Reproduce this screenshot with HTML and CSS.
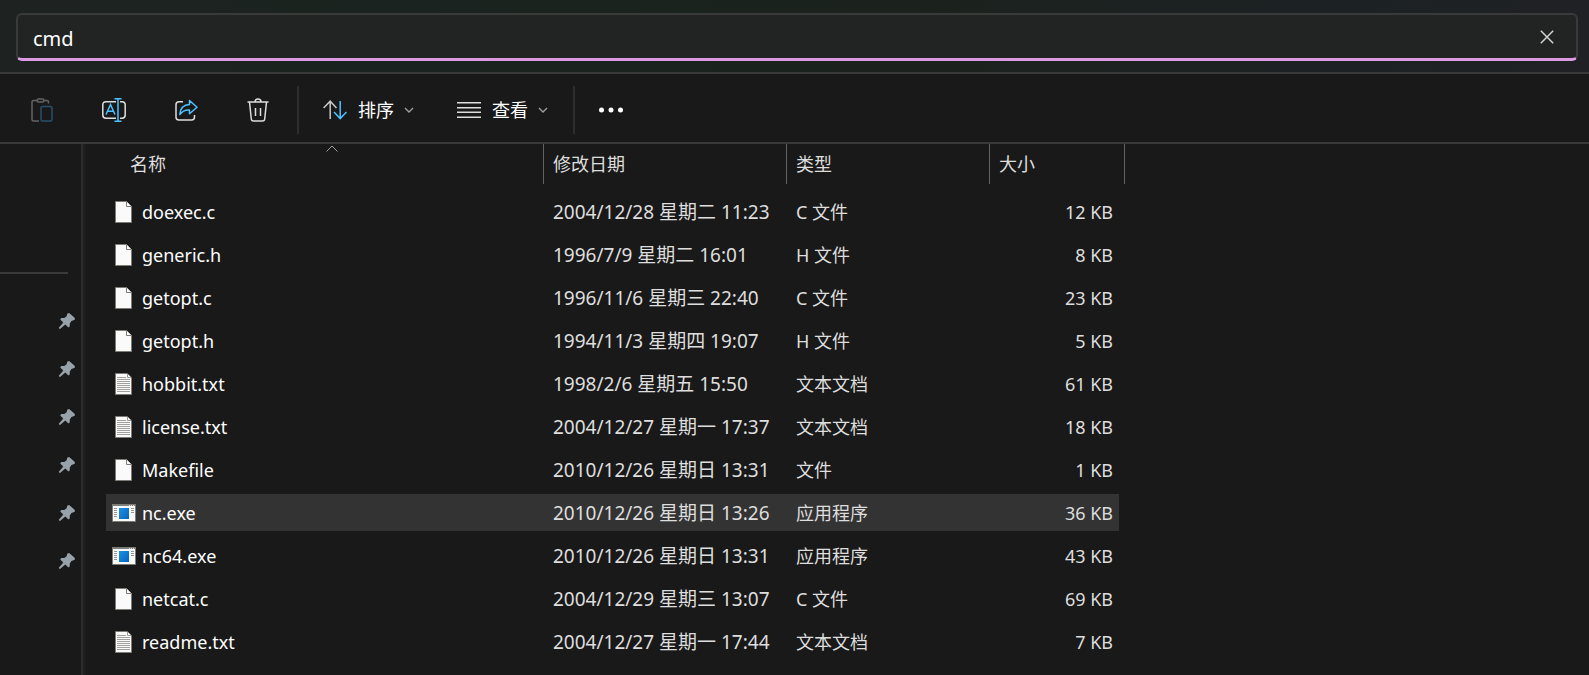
FILE: index.html
```
<!DOCTYPE html>
<html lang="zh-CN">
<head>
<meta charset="utf-8">
<title>cmd</title>
<link rel="stylesheet" href="styles.css">
</head>
<body>
<svg class="defs" aria-hidden="true">
  <symbol id="doc" viewBox="0 0 17 22"><path d="M.5.5h11l5 5v16H.5z" fill="#fafafa" stroke="#7c7b76"/><path d="M11.5.5v5h5" fill="#fafafa" stroke="#7c7b76"/></symbol>
  <symbol id="txt" viewBox="0 0 17 22"><path d="M.5.5h11l5 5v16H.5z" fill="#fafafa" stroke="#7c7b76"/><path d="M12.500.500v4h4" fill="#fafafa" stroke="#9a9a98"/><path d="M2 4.500h9M2 6.500h13M2 8.500h13M2 10.500h13M2 12.500h13M2 14.500h13M2 16.500h13M2 18.500h13" stroke="#a09f9b"/></symbol>
  <symbol id="exe" viewBox="0 0 24 18"><path d="M.5.5h23v17H.5z" fill="#fafafa" stroke="#7c7b76"/><path d="M0 0h24v2H0z" fill="#7c7b76"/><path d="M17 1.500h1M19 1.500h1M21 1.500h1" stroke="#ddd"/><path d="M2 4.500h3M2 6.500h3M2 8.500h3M2 10.500h3M2 12.500h3M19 4.500h3M19 6.500h3M19 8.500h3" stroke="#969696"/><path d="M7 4h10v11H7z" fill="url(#blue)"/></symbol>
  <symbol id="pin" viewBox="0 0 16 16"><path d="M8.500.3H10.500L15.800 5v1.700L12.500 8 10.800 10.600V13.200L9.500 14.500 6.300 11.500 1.300 15.800H0V14.500L4.300 9.500 1.200 6.500 2.300 5H5.300L7.600 3.300z" fill="#98a2aa"/></symbol>
  <symbol id="down" viewBox="0 0 10 6"><path d="m1 1 4 4 4-4" fill="none" stroke="#a0a0a0" stroke-width="1.300"/></symbol>
  <linearGradient id="blue" x1="0" y1="0" x2="1" y2="1"><stop offset="0" stop-color="#1c93e3"/><stop offset="1" stop-color="#0663bd"/></linearGradient>
</svg>

<header class="address">
  <div class="field">
    <input class="path" type="text" value="cmd" aria-label="地址">
    <button class="clear" type="button" aria-label="清除"><svg width="14" height="14" viewBox="0 0 14 14"><path d="m.8.8 12.400 12.400M13.200.8.8 13.200" stroke="#d2d2d2" stroke-width="1.500"/></svg></button>
  </div>
</header>

<div class="toolbar" role="toolbar" aria-label="命令">
  <div class="icons">
    <button class="tool" type="button" aria-label="粘贴" disabled><svg width="24" height="24" viewBox="0 0 24 24" fill="none" stroke-width="1.500"><path d="M7 2.500H3.500Q2 2.500 2 4v17.500Q2 23 3.500 23H9M13.500 2.500H17q1.500 0 1.500 1.500v1.500" stroke="#646464"/><rect x="7" y="1" width="7" height="3" rx="1.500" stroke="#646464"/><rect x="11" y="8.500" width="11" height="14.500" rx="1.500" stroke="#28506a"/></svg></button>
    <button class="tool" type="button" aria-label="重命名"><svg width="24" height="24" viewBox="0 0 24 24" fill="none" stroke-width="1.500"><path d="M14 3.700H4Q.8 3.700.8 7v10q0 3.200 3.200 3.200h10M18 3.700h2q3.200 0 3.200 3.300v10q0 3.200-3.200 3.200h-2" stroke="#dedede"/><path d="M12.500.8h7M12.500 23.200h7M16 .8v22.400M4 16.500 8.500 6.500 13 16.500M5.500 13.200h6" stroke="#4cc2ff"/></svg></button>
    <button class="tool" type="button" aria-label="共享"><svg width="24" height="24" viewBox="0 0 24 24" fill="none" stroke-width="1.500" stroke-linejoin="round"><path d="M9 3.700H5Q2 3.700 2 6.700v12.500Q2 22 5 22h12.500q3 0 3-3v-2" stroke="#dedede"/><path d="M15.500 2.500 23 9.300l-7.500 6.500V12Q9.500 11.500 5.800 16.500 6.500 7 15.500 6.500z" stroke="#4cc2ff"/></svg></button>
    <button class="tool" type="button" aria-label="删除"><svg width="24" height="24" viewBox="0 0 24 24" fill="none" stroke="#dedede" stroke-width="1.500" stroke-linejoin="round"><path d="M1.500 4h21M9 4q0-3 3-3t3 3M3.500 4l1.800 17q.2 2 2.200 2h9q2 0 2.200-2l1.800-17M9.500 10v8M14.500 10v8"/></svg></button>
  </div>
  <span class="rule"></span>
  <div class="menus">
    <button class="menu" type="button"><svg width="24" height="20" viewBox="0 0 24 20" fill="none" stroke-width="1.500"><path d="M7.200 19V1.200M.6 8l6.600-6.800L13.500 8" stroke="#c8c8c8"/><path d="M17.200 1v17.800M11 12l6.200 6.600 6.300-6.600" stroke="#4cc2ff"/></svg><span class="label">排序</span><svg width="10" height="6"><use href="#down"/></svg></button>
    <button class="menu" type="button"><svg width="24" height="16" viewBox="0 0 24 16"><path d="M0 .7h24M0 5.700h24M0 10.200h24M0 15.200h24" stroke="#dedede" stroke-width="1.400"/></svg><span class="label">查看</span><svg width="10" height="6"><use href="#down"/></svg></button>
  </div>
  <span class="rule"></span>
  <button class="more" type="button" aria-label="更多"><svg width="24" height="6" viewBox="0 0 24 6" fill="#fff"><circle cx="2.500" cy="3" r="2.500"/><circle cx="12" cy="3" r="2.500"/><circle cx="21.500" cy="3" r="2.500"/></svg></button>
</div>

<div class="body">
  <nav class="side" aria-label="快速访问">
    <ul class="pins">
      <li><svg width="16" height="16"><use href="#pin"/></svg></li>
      <li><svg width="16" height="16"><use href="#pin"/></svg></li>
      <li><svg width="16" height="16"><use href="#pin"/></svg></li>
      <li><svg width="16" height="16"><use href="#pin"/></svg></li>
      <li><svg width="16" height="16"><use href="#pin"/></svg></li>
      <li><svg width="16" height="16"><use href="#pin"/></svg></li>
    </ul>
  </nav>
  <main class="content">
    <table class="files">
      <colgroup><col class="c-name"><col class="c-date"><col class="c-type"><col class="c-size"><col class="c-end"></colgroup>
      <thead>
        <tr>
          <th scope="col"><div class="head first">名称<svg class="sorted" width="12" height="7" viewBox="0 0 12 7"><path d="m.5 6.500 5.500-5.500 5.500 5.500" fill="none" stroke="#a0a0a0"/></svg></div></th>
          <th scope="col"><div class="head">修改日期</div></th>
          <th scope="col"><div class="head">类型</div></th>
          <th scope="col" colspan="2"><div class="head">大小</div></th>
        </tr>
      </thead>
      <tbody>
        <tr><td><div class="name"><svg class="icon"><use href="#doc" x="4" width="17" height="22"/></svg>doexec.c</div></td><td class="date">2004/12/28 星期二 11:23</td><td>C 文件</td><td class="size">12 KB</td></tr>
        <tr><td><div class="name"><svg class="icon"><use href="#doc" x="4" width="17" height="22"/></svg>generic.h</div></td><td class="date">1996/7/9 星期二 16:01</td><td>H 文件</td><td class="size">8 KB</td></tr>
        <tr><td><div class="name"><svg class="icon"><use href="#doc" x="4" width="17" height="22"/></svg>getopt.c</div></td><td class="date">1996/11/6 星期三 22:40</td><td>C 文件</td><td class="size">23 KB</td></tr>
        <tr><td><div class="name"><svg class="icon"><use href="#doc" x="4" width="17" height="22"/></svg>getopt.h</div></td><td class="date">1994/11/3 星期四 19:07</td><td>H 文件</td><td class="size">5 KB</td></tr>
        <tr><td><div class="name"><svg class="icon"><use href="#txt" x="4" width="17" height="22"/></svg>hobbit.txt</div></td><td class="date">1998/2/6 星期五 15:50</td><td>文本文档</td><td class="size">61 KB</td></tr>
        <tr><td><div class="name"><svg class="icon"><use href="#txt" x="4" width="17" height="22"/></svg>license.txt</div></td><td class="date">2004/12/27 星期一 17:37</td><td>文本文档</td><td class="size">18 KB</td></tr>
        <tr><td><div class="name"><svg class="icon"><use href="#doc" x="4" width="17" height="22"/></svg>Makefile</div></td><td class="date">2010/12/26 星期日 13:31</td><td>文件</td><td class="size">1 KB</td></tr>
        <tr class="selected"><td><div class="name"><svg class="icon"><use href="#exe" x="1" y="2" width="24" height="18"/></svg>nc.exe</div></td><td class="date">2010/12/26 星期日 13:26</td><td>应用程序</td><td class="size">36 KB</td></tr>
        <tr><td><div class="name"><svg class="icon"><use href="#exe" x="1" y="2" width="24" height="18"/></svg>nc64.exe</div></td><td class="date">2010/12/26 星期日 13:31</td><td>应用程序</td><td class="size">43 KB</td></tr>
        <tr><td><div class="name"><svg class="icon"><use href="#doc" x="4" width="17" height="22"/></svg>netcat.c</div></td><td class="date">2004/12/29 星期三 13:07</td><td>C 文件</td><td class="size">69 KB</td></tr>
        <tr><td><div class="name"><svg class="icon"><use href="#txt" x="4" width="17" height="22"/></svg>readme.txt</div></td><td class="date">2004/12/27 星期一 17:44</td><td>文本文档</td><td class="size">7 KB</td></tr>
      </tbody>
    </table>
  </main>
</div>
</body>
</html>
```

FILE: styles.css
```
* { box-sizing: border-box; }

body {
  margin: 0;
  min-height: 100vh;
  display: flex;
  flex-direction: column;
  background: #191919;
  color: #fff;
  font: 18px/24px "Noto Sans", "Noto Sans CJK SC", sans-serif;
}

svg { display: block; flex: none; }
.defs { position: absolute; width: 0; height: 0; }

button {
  display: flex;
  align-items: center;
  justify-content: center;
  padding: 0;
  border: 0;
  background: none;
  color: inherit;
  font: inherit;
}

.address {
  padding: 13px 11px 11px 16px;
  border-bottom: 2px solid #3a3a3a;
  background: linear-gradient(90deg, #1e2321, #1a231f 25%, #1b221e 60%, #1c2224 85%, #202124);
}

.field {
  display: flex;
  align-items: center;
  height: 48px;
  padding-right: 15px;
  border: 2px solid #383b3a;
  border-bottom: 3px solid #dc9ae2;
  border-radius: 6px;
  background: #222423;
}

.path {
  flex: 1;
  min-width: 0;
  height: 40px;
  padding: 4px 15px 0;
  border: 0;
  outline: 0;
  background: none;
  color: #fff;
  font: inherit;
  font-size: 20px;
}

.clear { width: 28px; height: 28px; }

.toolbar {
  display: flex;
  align-items: center;
  padding: 12px 0 8px;
  border-bottom: 2px solid #3a3a3a;
}

.icons { display: flex; gap: 24px; padding: 0 15px 0 18px; }
.tool { width: 48px; height: 48px; }
.rule { width: 2px; height: 48px; background: #2e2e2e; }
.menus { display: flex; gap: 43px; padding: 0 25px 0 24px; }
.menu { height: 48px; gap: 10px; }
.label { padding-left: 1px; }
.more { width: 72px; height: 48px; }

.body { flex: 1; display: flex; }

.side {
  flex: none;
  width: 85px;
  padding-top: 128px;
  border-right: 2px solid #202020;
  box-shadow: inset -2px 0 #2c2c2c;
}

.pins {
  width: 68px;
  margin: 0;
  padding: 23px 0 0;
  border-top: 2px solid #3a3a3a;
  list-style: none;
}

.pins li {
  display: flex;
  align-items: center;
  height: 48px;
  padding-left: 59px;
}

.content { flex: 1; min-width: 0; padding-left: 21px; overflow: hidden; }

.files { table-layout: fixed; width: 1019px; border-spacing: 0; }
.c-name { width: 438px; }
.c-date { width: 243px; }
.c-type { width: 203px; }
.c-size { width: 129px; }
.c-end { width: 6px; }

th {
  height: 46px;
  padding: 0;
  vertical-align: top;
  text-align: left;
  font-weight: 400;
}

.head {
  position: relative;
  height: 40px;
  padding: 8px 9px;
  border-right: 1px solid #636363;
  color: #dedede;
}

.first { margin-left: 15px; }
.sorted { position: absolute; top: 1px; left: calc(50% - 6px); }

td {
  height: 43px;
  padding: 0 9px;
  border: solid transparent;
  border-width: 3px 0;
  background-clip: padding-box;
  color: #dedede;
  white-space: nowrap;
}

td:first-child { padding: 0 0 0 5px; color: #fff; }
.name { display: flex; align-items: center; gap: 6px; }
.icon { width: 25px; height: 22px; }
.date { font-size: 19px; }
.size { padding-right: 6px; text-align: right; }
.selected td { background-color: #333; }
```
